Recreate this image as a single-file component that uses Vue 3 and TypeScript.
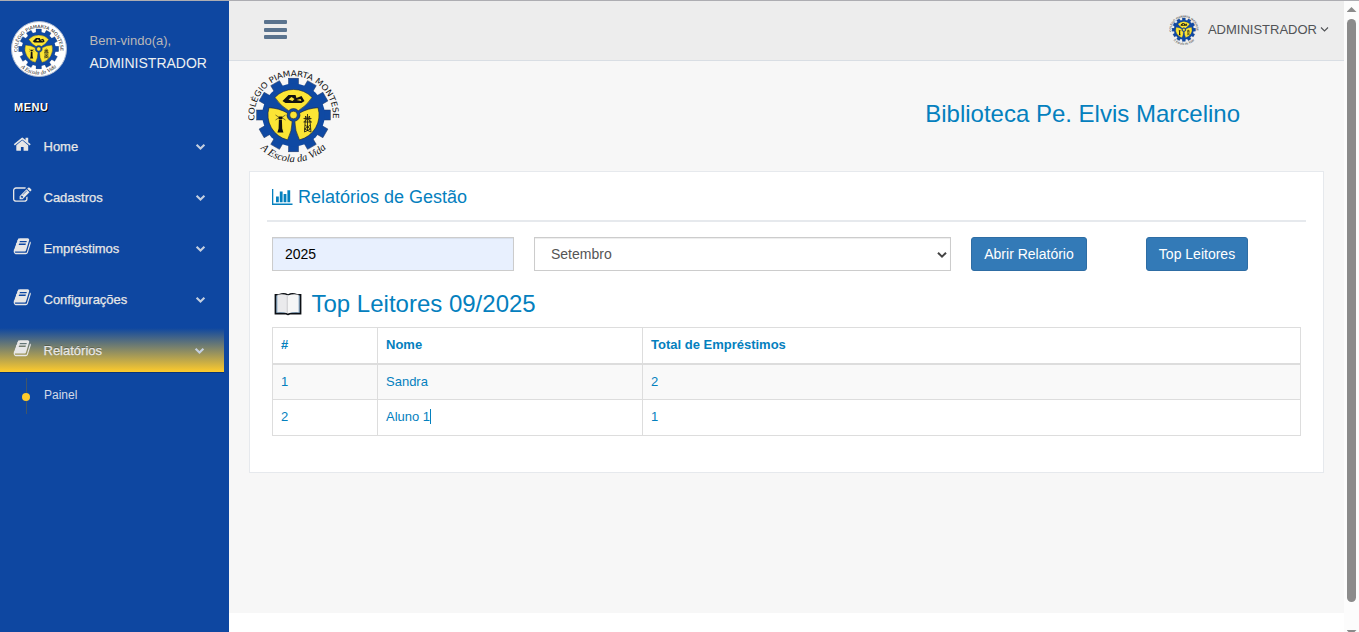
<script setup lang="ts">
interface MenuItem {
  label: string
  icon: string
  active?: boolean
}

const homeIcon = 'M1472 992v480q0 26-19 45t-45 19h-384v-384h-256v384h-384q-26 0-45-19t-19-45v-480q0-1 .5-3t.5-3l575-474 575 474q1 2 1 6zm223-69l-62 74q-8 9-21 11h-3q-13 0-21-7l-692-577-692 577q-12 8-24 7-13-2-21-11l-62-74q-8-10-7-23.5t11-21.5l719-599q32-26 76-26t76 26l244 204v-195q0-14 9-23t23-9h192q14 0 23 9t9 23v408l219 182q10 8 11 21.5t-7 23.5z'
const editIcon = 'M888 1184l116-116-152-152-116 116v56h96v96h56zm440-720q-16-16-33 1l-350 350q-17 17-1 33t33-1l350-350q17-17 1-33zm80 594v190q0 119-84.5 203.5t-203.5 84.5h-832q-119 0-203.5-84.5t-84.5-203.5v-832q0-119 84.5-203.5t203.5-84.5h832q63 0 117 25 15 7 18 23 3 17-9 29l-49 49q-14 14-32 8-23-6-45-6h-832q-66 0-113 47t-47 113v832q0 66 47 113t113 47h832q66 0 113-47t47-113v-126q0-13 9-22l64-64q15-15 35-7t20 29zm-96-738l288 288-672 672h-288v-288zm444 132l-92 92-288-288 92-92q28-28 68-28t68 28l152 152q28 28 28 68t-28 68z'
const bookIcon = 'M1703 478q40 57 18 129l-275 906q-19 64-76.5 107.5t-122.5 43.5h-923q-77 0-148.5-53.5t-99.5-131.5q-24-67-2-127 0-4 3-27t4-37q1-8-3-21.5t-3-19.5q2-11 8-21t16.5-23.5 16.5-23.5q23-38 45-91.5t30-91.5q3-10 .5-30t-.5-28q3-11 17-28t17-23q21-36 42-92t25-90q1-9-2.5-32t.5-28q4-13 22-30.5t22-22.5q19-26 42.5-84.5t27.5-96.5q1-8-3-25.5t-2-26.5q2-8 9-18t18-23 17-21q8-12 16.5-30.5t15-35 16-36 19.5-32 26.5-23.5 36-11.5 47.5 5.5l-1 3q38-9 51-9h761q74 0 114 56t18 130l-274 906q-36 119-71.5 153.5t-128.5 34.5h-869q-27 0-38 15-11 16-1 43 24 70 144 70h923q29 0 56-15.5t35-41.5l300-987q7-22 5-57 38 15 59 43zm-1064 2q-4 13 2 22.5t20 9.5h608q13 0 25.5-9.5t16.5-22.5l21-64q4-13-2-22.5t-20-9.5h-608q-13 0-25.5 9.5t-16.5 22.5zm-83 256q-4 13 2 22.5t20 9.5h608q13 0 25.5-9.5t16.5-22.5l21-64q4-13-2-22.5t-20-9.5h-608q-13 0-25.5 9.5t-16.5 22.5z'

const menu: MenuItem[] = [
  { label: 'Home', icon: homeIcon },
  { label: 'Cadastros', icon: editIcon },
  { label: 'Empréstimos', icon: bookIcon },
  { label: 'Configurações', icon: bookIcon },
  { label: 'Relatórios', icon: bookIcon, active: true },
]

const rows = [
  { pos: 1, name: 'Sandra', total: 2, caret: false },
  { pos: 2, name: 'Aluno 1', total: 1, caret: true },
]

const teeth = Array.from({ length: 12 }, (_, i) => i * 30)
</script>

<template>
  <div class="page">
    <svg class="defs" width="0" height="0" aria-hidden="true">
      <defs>
        <path id="ring-top" d="M6.7 51.5 A39.3 39.3 0 1 1 84.7 51.5" />
        <path id="ring-bottom" d="M12.5 79.5 A46.5 46.5 0 0 0 80 77.5" />
        <symbol id="school-logo" viewBox="0 0 92 94">
          <g transform="translate(45.5 46)">
            <g fill="#0f49a3" stroke="#23365f" stroke-width=".5">
              <rect v-for="a in teeth" :key="a" x="-5" y="-36.8" width="10" height="8" :transform="`rotate(${a})`" />
            </g>
            <circle r="31.3" fill="#0f49a3" />
            <g v-for="a in [0, 120, 240]" :key="a" :transform="`rotate(${a})`">
              <path d="M-18.6 -17.6 A25.7 25.7 0 0 1 18.6 -17.6 Q13 -9 4.8 -4.3 A6.4 6.4 0 0 0 -4.8 -4.3 Q-13 -9 -18.6 -17.6 Z" fill="#fce535" stroke="#17233f" stroke-width=".6" />
            </g>
            <circle r="3.8" fill="#fce535" stroke="#17233f" stroke-width=".6" />
            <path d="M-11 -14 L-5 -20 L2 -20 L3 -17 L8 -19 L11 -14 L8 -12 L-8 -12 Z" fill="#111" />
            <path d="M-5 -15.5 L-2 -18 L1 -16 L-1 -14 Z M3 -15 l4 -1 l1 2 z" fill="#fce535" />
            <path d="M-14.6 4.5 h3 l.3 9 l1.2 4 h-6 l1.2 -4 z M-15 1.5 h4 v2.4 h-4z" fill="#111" />
            <path d="M-18 0 l3 2 M-8 0 l-3 2 M-18 5 l3 -2 M-8 5 l-3 -2" stroke="#222" stroke-width=".6" />
            <path d="M12 1 L11 17 M16 1 L17.5 17 M10 3.5 H18 M10 7 H18.5 M11.5 10 L17 14 M17 10 L11 14 M11 14 L17.5 17 M17 14 L11 17 M12 1 L17 7 M16 1 L11 7 M14 -1 V16" fill="none" stroke="#111" stroke-width=".8" />
          </g>
          <text font-family="'DejaVu Sans', sans-serif" font-size="8.2" fill="#111">
            <textPath href="#ring-top" textLength="131" lengthAdjust="spacingAndGlyphs">COLÉGIO PIAMARTA MONTESE</textPath>
          </text>
          <text font-family="'Liberation Serif', serif" font-size="10.5" font-style="italic" fill="#111">
            <textPath href="#ring-bottom" textLength="73">A Escola da Vida</textPath>
          </text>
        </symbol>
      </defs>
    </svg>

    <aside class="sidebar">
      <div class="profile">
        <span class="avatar"><svg><use href="#school-logo" /></svg></span>
        <div class="who">
          <span>Bem-vindo(a),</span>
          <h2>ADMINISTRADOR</h2>
        </div>
      </div>
      <h3 class="menu-title">MENU</h3>
      <nav class="menu">
        <a v-for="item in menu" :key="item.label" class="item" :class="{ active: item.active }">
          <svg class="item-icon" viewBox="0 0 1792 1792"><path :d="item.icon" /></svg>
          <span class="label">{{ item.label }}</span>
          <svg class="chevron" viewBox="0 0 10 8"><path d="M1.1 1.8 L5 5.5 L8.9 1.8" /></svg>
        </a>
        <a class="sub"><span class="dot"></span><span>Painel</span></a>
      </nav>
    </aside>

    <div class="right">
      <header class="topbar">
        <div class="burger"><i></i><i></i><i></i></div>
        <div class="account">
          <svg class="mini-logo"><use href="#school-logo" /></svg>
          <span>ADMINISTRADOR</span>
          <svg class="angle" viewBox="0 0 9 7"><path d="M1 1.5 L4.5 5 L8 1.5" /></svg>
        </div>
      </header>

      <main class="content">
        <div class="brand">
          <svg class="big-logo"><use href="#school-logo" /></svg>
          <h1>Biblioteca Pe. Elvis Marcelino</h1>
        </div>

        <section class="panel">
          <div class="panel-title">
            <svg viewBox="0 0 20 16">
              <path d="M0 0 H1.3 V14.6 H20.5 V16 H0 Z M4 7.5 H6.8 V13.3 H4 Z M7.8 2.5 H10.6 V13.3 H7.8 Z M11.6 5 H14.4 V13.3 H11.6 Z M15.4 1.2 H18.2 V13.3 H15.4 Z" />
            </svg>
            <h2>Relatórios de Gestão</h2>
          </div>

          <div class="filters">
            <div class="field year">2025</div>
            <div class="field month">
              <span>Setembro</span>
              <svg viewBox="0 0 10 8"><path d="M1 1.7 L5 5.7 L9 1.7" /></svg>
            </div>
            <button class="btn open">Abrir Relatório</button>
            <button class="btn top">Top Leitores</button>
          </div>

          <h3 class="ranking">
            <svg viewBox="0 0 28 24">
              <path d="M.6 2 H5 Q10 0 14 2.2 Q18 0 23 2 H27.4 V22.5 H16 Q14 24 12 22.5 H.6 Z" fill="#0c0f14" />
              <path d="M2.2 3.4 H25.8 V20.8 H2.2 Z" fill="#8aa9c4" />
              <path d="M3.4 2.8 Q9 1.5 14 3.5 V21.4 Q9 19.7 3.4 20.2 Z" fill="#eaeaec" />
              <path d="M24.6 2.8 Q19 1.5 14 3.5 V21.4 Q19 19.7 24.6 20.2 Z" fill="#f6f6f6" />
              <path d="M12.6 3 L14 3.6 V21.4 L12.6 20.8 Z" fill="#d5d5d7" />
            </svg>
            <span>Top Leitores 09/2025</span>
          </h3>

          <table>
            <thead>
              <tr><th class="c1">#</th><th class="c2">Nome</th><th>Total de Empréstimos</th></tr>
            </thead>
            <tbody>
              <tr v-for="row in rows" :key="row.pos">
                <td>{{ row.pos }}</td>
                <td>{{ row.name }}<i v-if="row.caret" class="caret"></i></td>
                <td>{{ row.total }}</td>
              </tr>
            </tbody>
          </table>
        </section>
      </main>
    </div>

    <div class="scrollbar"><i class="up"></i><i class="thumb"></i><i class="down"></i></div>
  </div>
</template>

<style>
body { margin: 0; overflow: hidden; }
</style>

<style scoped>
* { box-sizing: border-box; }
.page {
  display: flex;
  width: 1359px;
  height: 632px;
  border-top: 1px solid #adadb2;
  background: #fff;
  color: #0480be;
  font-family: "Liberation Sans", Arial, sans-serif;
  font-size: 13px;
  overflow: hidden;
}
.defs { position: absolute; }
h1, h2, h3 { margin: 0; font-weight: 400; }

.sidebar { width: 229px; flex: none; background: #0e47a1; color: #e7e7e7; }
.profile { display: flex; height: 97px; padding: 20px 0 0 11px; }
.avatar {
  display: flex;
  align-items: center;
  justify-content: center;
  width: 56px;
  height: 56px;
  border: 1px solid #aebbd2;
  border-radius: 50%;
  background: #fff;
}
.avatar svg { width: 50px; height: 51px; }
.who { padding: 12px 0 0 22.5px; color: #bab8b8; line-height: 16px; }
.who h2 { margin-top: 6px; color: #ecf0f1; font-size: 14px; line-height: 16px; }
.menu-title {
  height: 26px;
  padding-left: 14px;
  color: #fff;
  font-size: 11px;
  font-weight: 700;
  letter-spacing: .5px;
  line-height: 18px;
  text-shadow: 1px 1px #000;
}
.menu { display: flex; flex-direction: column; gap: 7px; }
.item { display: flex; width: 224px; height: 44px; align-items: center; padding: 0 19px 0 13px; }
.item-icon { width: 18.5px; height: 18.5px; margin: -3px 12px 0 0; fill: #e7e7e7; }
.label { flex: 1; -webkit-text-stroke: .25px #e7e7e7; }
.chevron { width: 11px; height: 8px; margin-top: 1px; }
.item:not(.active) .chevron { margin-right: -1px; }
.chevron path { fill: none; stroke: #c4cfe0; stroke-width: 2.1; }
.active {
  background: linear-gradient(#0e47a1, #ffcb2b);
  box-shadow: 0 1px 0 rgba(0, 0, 0, .25);
  text-shadow: 0 -1px 0 rgba(0, 0, 0, .25);
}
.sub {
  display: flex;
  height: 36px;
  margin-top: -1px;
  margin-left: 26px;
  border-left: 1px solid #425668;
  color: #d3dbe8;
  font-size: 12px;
  line-height: 34px;
}
.dot { width: 8px; height: 8px; margin: 15px 14px 0 -5px; border-radius: 50%; background: #ffcb2b; }

.right { width: 1115px; flex: none; }
.topbar {
  display: flex;
  height: 60px;
  justify-content: space-between;
  padding: 0 15px 0 35px;
  border-bottom: 1px solid #d9dee4;
  background: #ededed;
}
.burger { display: flex; width: 23px; flex-direction: column; gap: 3.5px; padding-top: 19px; }
.burger i { height: 4px; border-radius: 1px; background: #5a738e; }
.account { display: flex; height: 57px; align-items: center; color: #515356; }
.mini-logo { width: 30px; height: 30px; margin-right: 9px; }
.angle { width: 9px; height: 7px; margin-left: 3px; }
.angle path { fill: none; stroke: #515356; stroke-width: 1.1; }

.content { height: 552px; padding: 0 20px; background: #f7f7f7; }
.brand { display: flex; height: 110px; justify-content: space-between; padding: 8px 84px 0 0; }
.big-logo { width: 92px; height: 94px; margin-left: -1px; }
h1 { margin-top: 31px; font-size: 24px; line-height: 28px; }

.panel { width: 1075px; height: 302px; padding: 10px 17px; border: 1px solid #e6e9ed; background: #fff; }
.panel-title {
  display: flex;
  height: 40px;
  padding-left: 5px;
  border-bottom: 2px solid #e6e9ed;
}
.panel-title svg { width: 20px; height: 16px; margin: 7px 6px 0 0; fill: #0480be; overflow: visible; }
.panel-title h2 { font-size: 18px; line-height: 30px; }
.filters { display: flex; padding: 15px 5px 0; }
.field { height: 34px; border: 1px solid #ccc; font-size: 14px; line-height: 32px; box-shadow: inset 0 1px 1px rgba(0, 0, 0, .075); }
.year { width: 242px; padding-left: 12px; background: #e8f0fe; color: #000; }
.month { display: flex; width: 417px; align-items: center; justify-content: space-between; margin-left: 20px; padding: 0 3px 0 16px; color: #555; }
.month svg { width: 10px; height: 8px; margin-top: 1px; }
.month path { fill: none; stroke: #444; stroke-width: 2; }
.btn {
  height: 34px;
  padding: 0;
  border: 1px solid #2e6da4;
  border-radius: 3px;
  background: #337ab7;
  color: #fff;
  font: 14px "Liberation Sans", Arial, sans-serif;
}
.open { width: 116px; margin-left: 20px; }
.top { width: 102px; margin-left: 59px; }
.ranking { display: flex; height: 56px; align-items: center; padding: 10px 0 0 7px; font-size: 24px; }
.ranking svg { width: 28px; height: 24px; margin-right: 9.5px; }
table { width: 1029px; margin-left: 5px; border-collapse: collapse; table-layout: fixed; }
th, td { height: 36px; padding: 0 8px; border: 1px solid #ddd; text-align: left; line-height: 18px; }
th { height: 36px; padding-bottom: 1px; border-bottom-width: 2px; font-weight: 700; }
.c1 { width: 105px; }
.c2 { width: 265px; }
tbody tr:first-child { background: #f9f9f9; }
tbody tr:first-child td { padding-bottom: 0; }
td { padding-bottom: 1px; }
.caret { display: inline-block; width: 1px; height: 15px; background: #0480be; vertical-align: -3px; }

.scrollbar { display: flex; width: 15px; flex-direction: column; align-items: center; background: #fcfcfc; }
.scrollbar i { flex: none; }
.up { width: 10px; height: 5px; margin-top: 6px; background: #8b8b8b; clip-path: polygon(50% 0, 100% 100%, 0 100%); }
.thumb { width: 9px; height: 583px; margin-top: 7px; border-radius: 5px; background: #8b8b8b; }
.down { width: 10px; height: 5px; margin-top: 28px; background: #8b8b8b; clip-path: polygon(0 0, 100% 0, 50% 100%); }
</style>
